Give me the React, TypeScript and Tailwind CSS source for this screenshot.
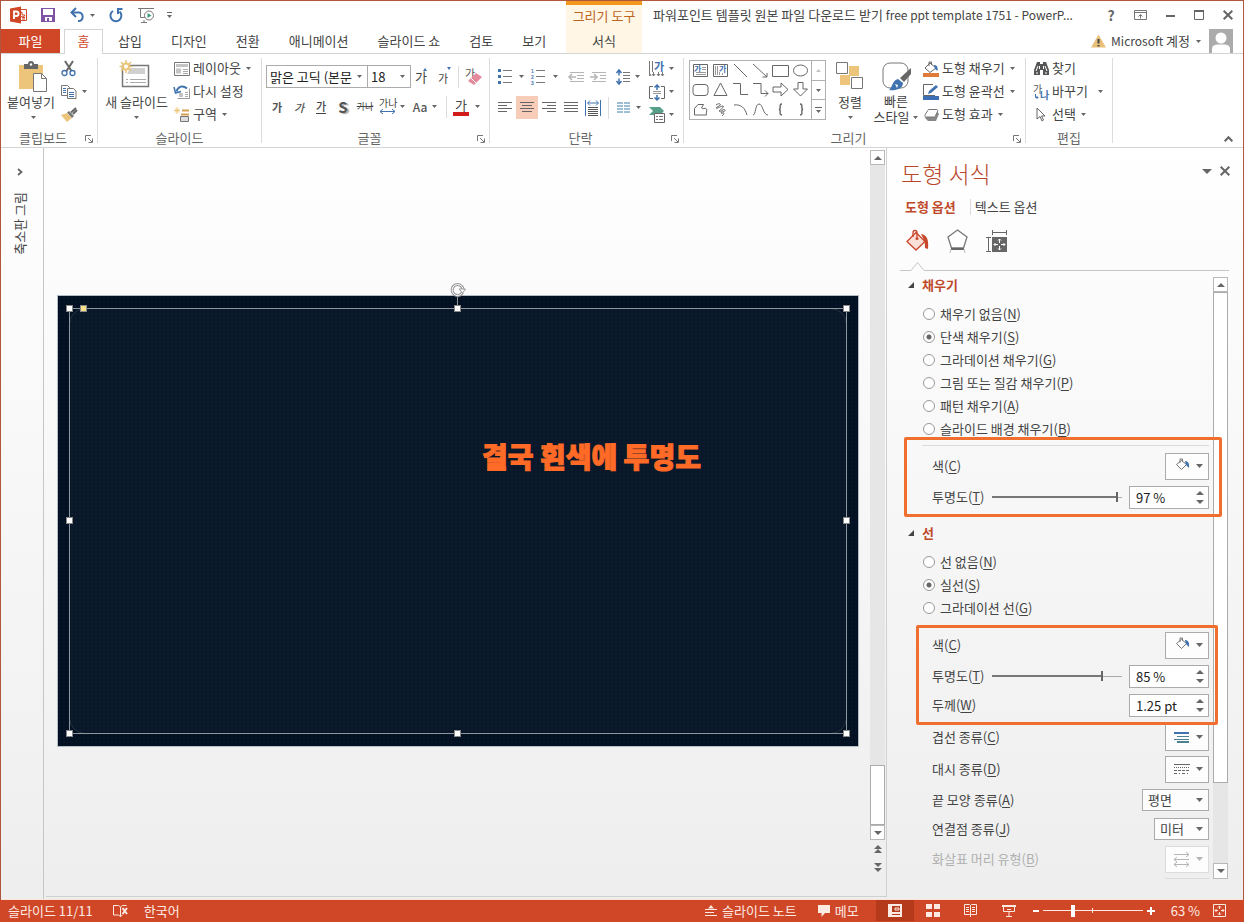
import { useState, type ReactNode } from 'react'
import clsx from 'clsx'

/* ---------- helpers ---------- */

interface GlyphProps {
  w: number
  h: number
  children: ReactNode
  className?: string
}

function Glyph({ w, h, children, className }: GlyphProps) {
  return (
    <svg
      width={w}
      height={h}
      viewBox={`0 0 ${w} ${h}`}
      fill="none"
      aria-hidden="true"
      className={clsx('shrink-0 overflow-visible', className)}
    >
      {children}
    </svg>
  )
}

function Caret({ className = 'text-[#666]' }: { className?: string }) {
  return (
    <Glyph w={5} h={3} className={className}>
      <path d="M0 0h5L2.5 3z" fill="currentColor" />
    </Glyph>
  )
}

function BigCaret({ up = false }: { up?: boolean }) {
  return (
    <Glyph w={8} h={4} className={clsx('text-[#666]', up && 'rotate-180')}>
      <path d="M0 0h8L4 4z" fill="currentColor" />
    </Glyph>
  )
}

interface ToolProps {
  label: string
  className?: string
  children: ReactNode
}

function Tool({ label, className, children }: ToolProps) {
  return (
    <button
      type="button"
      aria-label={label}
      className={clsx('flex shrink-0 items-center justify-center', className)}
    >
      {children}
    </button>
  )
}

function RowTool({
  icon,
  text,
  caret = true,
}: {
  icon: ReactNode
  text: string
  caret?: boolean
}) {
  return (
    <button type="button" className="flex h-[23px] items-center whitespace-nowrap">
      <span className="flex w-4 justify-center">{icon}</span>
      <span className="ml-[3px] pb-[2px] leading-4">{text}</span>
      {caret && <Caret className="ml-[5px] text-[#666]" />}
    </button>
  )
}

interface GroupProps {
  name: string
  className: string
  launcher?: boolean
  children: ReactNode
}

function Group({ name, className, launcher = true, children }: GroupProps) {
  return (
    <>
      <section aria-label={name} className={clsx('shrink-0', className)}>
        <div className="flex h-[72px] pt-[3px]">{children}</div>
        <div className="flex h-[21px] items-center pt-[3px]">
          <span className="flex-1 text-center leading-[18px] text-[#666]">{name}</span>
          {launcher && (
            <Tool label={`${name} 옵션`} className="mr-1 pt-[2px]">
              <Glyph w={8} h={8}>
                <path d="M.5 6V.5H6" stroke="#777" />
                <path d="M3 3l4 4M7.500 3.500v4h-4" stroke="#777" />
              </Glyph>
            </Tool>
          )}
        </div>
      </section>
      <div className="mt-1 mb-1 w-px shrink-0 bg-[#dcdcdc]" />
    </>
  )
}

/* ---------- title bar ---------- */

function QuickAccess() {
  return (
    <div className="flex h-full w-[565px] shrink-0 items-center pl-[9px]">
      <Glyph w={18} h={18}>
        <path d="M10.500 3.500h6v11h-6" stroke="#d04727" fill="#fff" />
        <path d="M12 6a2.500 2.500 0 1 0 3 3h-3zM12 11.500h3M12 13h3" stroke="#d04727" />
        <path d="M0 2.500L11 .5v17L0 15.500z" fill="#d04727" />
        <path d="M4 13V5.500h2.300a2.200 2.200 0 0 1 0 4.500H4" stroke="#fff" strokeWidth="1.800" />
      </Glyph>
      <Tool label="저장" className="ml-[13px]">
        <Glyph w={14} h={14}>
          <path d="M0 0h14v14H0z" fill="#8153a5" />
          <path d="M2 1h10v6H2zM4 9h7v4H8v-3H6v3H4z" fill="#fff" />
        </Glyph>
      </Tool>
      <Tool label="실행 취소" className="ml-[15px]">
        <Glyph w={15} h={14}>
          <path d="M2 4.500h7a4.300 4.300 0 0 1 0 8.500H8" stroke="#3f72ae" strokeWidth="2" />
          <path d="M6 0L1.500 4.500 6 9" stroke="#3f72ae" strokeWidth="2" />
        </Glyph>
      </Tool>
      <Tool label="실행 취소 목록" className="ml-[5px]">
        <Caret />
      </Tool>
      <Tool label="다시 실행" className="ml-[14px]">
        <Glyph w={14} h={14}>
          <path d="M4 3a5.500 5.500 0 1 0 6.500.5" stroke="#3f72ae" strokeWidth="2" />
          <path d="M13.500 1H9v5" stroke="#3f72ae" strokeWidth="2" />
        </Glyph>
      </Tool>
      <Tool label="슬라이드 쇼 시작" className="ml-[15px]">
        <Glyph w={17} h={15}>
          <path d="M0 .5h16M2.500 1v8.500H7M6 12v2M3 14.500h6" stroke="#777" />
          <circle cx="11" cy="7.500" r="4.500" stroke="#777" fill="#fff" />
          <path d="M9.500 5l4 2.500-4 2.500z" fill="#3f9b77" />
        </Glyph>
      </Tool>
      <Tool label="도구 모음 사용자 지정" className="ml-3">
        <Glyph w={5} h={6}>
          <path d="M0 .5h5" stroke="#666" />
          <path d="M0 3h5L2.500 6z" fill="#666" />
        </Glyph>
      </Tool>
    </div>
  )
}

function TitleBar() {
  return (
    <div className="flex h-7 items-center">
      <QuickAccess />
      <div className="h-full w-[76px] shrink-0 border-t-4 border-[#f0971c] bg-[#fff6e6] text-center leading-[22px] text-[#bd6420]">
        그리기 도구
      </div>
      <h1 className="ml-[11px] min-w-0 flex-1 truncate leading-5 text-[#444]">
        파워포인트 템플릿 원본 파일 다운로드 받기{' '}
        <span className="text-[12px]">free ppt template 1751 - PowerP...</span>
      </h1>
      <div className="flex items-center pr-[10px]">
        <Tool label="도움말" className="w-7 text-[14px] leading-5 font-bold text-[#666]">
          ?
        </Tool>
        <Tool label="리본 메뉴 표시 옵션" className="w-[30px]">
          <Glyph w={13} h={10}>
            <path d="M.5.5h12v9H.5zM.5 2.500h12" stroke="#777" />
            <path d="M6.500 8.500v-4M4.500 6.500l2-2 2 2" stroke="#777" />
          </Glyph>
        </Tool>
        <Tool label="최소화" className="w-[30px]">
          <Glyph w={9} h={10}>
            <path d="M0 6h9" stroke="#666" strokeWidth="2" />
          </Glyph>
        </Tool>
        <Tool label="최대화" className="w-[28px]">
          <Glyph w={10} h={10}>
            <path d="M.5 1v8.500h9V1" stroke="#666" />
            <path d="M0 1h10" stroke="#666" strokeWidth="2" />
          </Glyph>
        </Tool>
        <Tool label="닫기" className="w-[20px] justify-end pl-[10px]">
          <Glyph w={10} h={10}>
            <path d="M.7.7l8.600 8.600M9.300.7L.7 9.300" stroke="#666" strokeWidth="2" />
          </Glyph>
        </Tool>
      </div>
    </div>
  )
}

const TABS = ['삽입', '디자인', '전환', '애니메이션', '슬라이드 쇼', '검토', '보기']

function TabRow() {
  return (
    <div className="flex h-[25px] items-stretch border-b border-[#d4d4d4] leading-6">
      <nav className="flex w-[565px] shrink-0">
        <button type="button" className="w-[59px] bg-[#d04727] text-white">
          파일
        </button>
        <button
          type="button"
          className="-mb-px ml-1 w-[39px] border border-b-0 border-[#d4d4d4] bg-white pb-[3px] leading-5 text-[#d04727]"
        >
          홈
        </button>
        {TABS.map((tab) => (
          <button key={tab} type="button" className="pr-[14px] pl-[15px] whitespace-nowrap">
            {tab}
          </button>
        ))}
      </nav>
      <button type="button" className="w-[76px] shrink-0 bg-[#fff6e6]">
        서식
      </button>
      <div className="ml-auto flex items-center pr-[10px]">
        <Glyph w={15} h={14}>
          <path d="M7.500.5L15 13.500H0z" fill="#e8c07a" />
          <path d="M7.500 5v4.500M7.500 11v1.500" stroke="#444" strokeWidth="2" />
        </Glyph>
        <button type="button" className="ml-[5px] flex items-center whitespace-pre">
          <span className="text-[12px]">Microsoft </span>
          계정
          <Caret className="ml-[6px] text-[#666]" />
        </button>
        <Glyph w={24} h={24} className="ml-2">
          <path d="M0 0h24v24H0z" fill="#ababab" />
          <circle cx="12" cy="9" r="5.500" fill="#fff" />
          <path d="M3 24v-4c0-3 2-4 5-4.500h8c3 .5 5 1.500 5 4.500v4z" fill="#fff" />
        </Glyph>
      </div>
    </div>
  )
}

/* ---------- ribbon groups ---------- */

function ClipboardGroup() {
  return (
    <Group name="클립보드" className="w-24">
      <button type="button" className="ml-1 flex w-[52px] flex-col items-center pt-[5px]">
        <Glyph w={29} h={30} className="ml-1">
          <path d="M0 3h24v24H0z" fill="#ecc57b" />
          <path d="M5 2h4a3 3 0 0 1 6 0h4v5H5z" fill="#666" />
          <circle cx="12" cy="2.500" r="1.200" fill="#fff" />
          <path d="M14.500 11.500h8l5 5v13h-13z" fill="#fff" stroke="#777" />
          <path d="M22.500 11.500v5h5" stroke="#777" />
        </Glyph>
        <span className="mt-[2px] leading-4 whitespace-nowrap">붙여넣기</span>
        <Caret className="mt-[6px] ml-1 text-[#666]" />
      </button>
      <div className="ml-1 flex flex-col items-start">
        <Tool label="잘라내기" className="h-[23px]">
          <Glyph w={16} h={15}>
            <path d="M4 0l6.500 10M12 0L5.500 10" stroke="#666" strokeWidth="2" />
            <circle cx="3.500" cy="12" r="2.500" stroke="#3f72ae" strokeWidth="1.300" />
            <circle cx="11.500" cy="12" r="2.500" stroke="#3f72ae" strokeWidth="1.300" />
          </Glyph>
        </Tool>
        <div className="flex h-[23px] items-center">
          <Tool label="복사">
            <Glyph w={16} h={14}>
              <path d="M.5.5h6l2 2v8h-8z" fill="#fff" stroke="#777" />
              <path d="M6.500 3.500h6l2.500 2.500v7.500H6.500z" fill="#fff" stroke="#777" />
              <path d="M2 3.500h3M2 5.500h3M2 7.500h3M8 7.500h5M8 9.500h5M8 11.500h5" stroke="#3f72ae" />
            </Glyph>
          </Tool>
          <Tool label="복사 옵션" className="ml-[5px]">
            <Caret />
          </Tool>
        </div>
        <Tool label="서식 복사" className="h-[23px]">
          <Glyph w={16} h={14}>
            <path d="M0 7l6-2 5 5-5 4z" fill="#ecc57b" />
            <path d="M6 4.500l2-1.500 5 5-2 2z" fill="#777" />
            <path d="M10 4.500L15 0M12 6l4-4" stroke="#666" strokeWidth="2" />
          </Glyph>
        </Tool>
      </div>
    </Group>
  )
}

function SlidesGroup() {
  return (
    <Group name="슬라이드" className="w-[163px]" launcher={false}>
      <button type="button" className="ml-[5px] flex w-[67px] flex-col items-center pt-[3px]">
        <Glyph w={31} h={30} className="-ml-1">
          <path d="M3.500 5.500h26v21h-26z" fill="#fff" stroke="#777" strokeWidth="1.500" />
          <path d="M11 8h15v6H8z" fill="#d0d0d0" />
          <path d="M7 19.500h2M11 19.500h16M7 22.500h2M11 22.500h16" stroke="#aaa" />
          <circle cx="7" cy="6.500" r="3" fill="#fff" stroke="#ecc57b" strokeWidth="2" />
          <path
            d="M7 0v3M7 10v3M.5 6.500h3M10.500 6.500h3M2 2l2.500 2.500M12 2L9.500 4.500M2 11l2.500-2.500M12 11L9.500 8.500"
            stroke="#ecc57b"
            strokeWidth="1.600"
          />
        </Glyph>
        <span className="mt-1 leading-4 whitespace-nowrap">새 슬라이드</span>
        <Caret className="mt-[6px] text-[#666]" />
      </button>
      <div className="ml-1 flex flex-col items-start">
        <RowTool
          text="레이아웃"
          icon={
            <Glyph w={16} h={14}>
              <path d="M.5.500h15v13H.5z" fill="#fff" stroke="#777" />
              <path d="M2 2h12v3H2zM2 6.500h5v5H2z" fill="#c4c4c4" />
              <path d="M9 7.500h5M9 9.500h5M9 11.500h5" stroke="#aaa" />
            </Glyph>
          }
        />
        <RowTool
          text="다시 설정"
          caret={false}
          icon={
            <Glyph w={16} h={14}>
              <path d="M3.500 13.500h12v-10" stroke="#999" />
              <path d="M5 8h4v4H5z" fill="#c4c4c4" />
              <path d="M11 7.500h3M11 9.500h3M11 11.500h3" stroke="#aaa" />
              <path d="M2.500 6.500C4 1 9 0 13 3.500" stroke="#3f72ae" strokeWidth="2" />
              <path d="M0 2l1.500 6L7 6.500" stroke="#3f72ae" strokeWidth="1.500" />
            </Glyph>
          }
        />
        <RowTool
          text="구역"
          icon={
            <Glyph w={16} h={15}>
              <path d="M3 0v7M0 3.500h6M1 1.500l4 4M5 1.500l-4 4" stroke="#ecc57b" />
              <path d="M8 3.500h7M7 7.500h8" stroke="#d8a050" strokeWidth="2" />
              <path d="M6.500 9.500h8v5h-8z" fill="#ddd" stroke="#777" />
            </Glyph>
          }
        />
      </div>
    </Group>
  )
}

function FontGroup() {
  return (
    <Group name="글꼴" className="w-[227px]">
      <div className="flex flex-col pl-1">
        <div className="mt-2 flex h-[23px] items-center">
          <div className="relative h-[23px] w-[102px]">
            <select
              aria-label="글꼴"
              className="h-full w-full appearance-none border border-[#ababab] bg-white pl-[3px] text-[13px] leading-4 text-[#222] outline-none"
            >
              <option>맑은 고딕 (본문</option>
            </select>
            <Caret className="pointer-events-none absolute top-[10px] right-[6px] text-[#666]" />
          </div>
          <div className="relative -ml-px h-[23px] w-11">
            <select
              aria-label="글꼴 크기"
              className="h-full w-full appearance-none border border-[#ababab] bg-white pl-[3px] text-[13px] leading-4 text-[#222] outline-none"
            >
              <option>18</option>
            </select>
            <Caret className="pointer-events-none absolute top-[10px] right-[6px] text-[#666]" />
          </div>
          <Tool label="글꼴 크게" className="w-5 items-end">
            <span className="leading-5">가</span>
            <Glyph w={4} h={3} className="mb-4 -ml-1">
              <path d="M0 3h4L2 0z" fill="#3f72ae" />
            </Glyph>
          </Tool>
          <Tool label="글꼴 작게" className="w-[27px] items-end">
            <span className="text-[11px] leading-4">가</span>
            <Glyph w={4} h={3} className="mb-4 -ml-px">
              <path d="M0 0h4L2 3z" fill="#3f72ae" />
            </Glyph>
          </Tool>
          <div className="h-[22px] w-px bg-[#dcdcdc]" />
          <Tool label="서식 지우기" className="w-[30px]">
            <Glyph w={18} h={18}>
              <text x="0" y="10" fontSize="11" fill="#555">
                가
              </text>
              <path d="M3 13l8-8 6 4-8 8z" fill="#e48a9c" />
              <path d="M6 10l5 5" stroke="#fff" />
            </Glyph>
          </Tool>
        </div>
        <div className="mt-[7px] flex h-[23px] items-center text-[11px] leading-4">
          <Tool label="굵게" className="w-[22px] font-bold text-[#555]">
            가
          </Tool>
          <Tool label="기울임꼴" className="w-[22px] font-medium text-[#555] italic">
            가
          </Tool>
          <Tool label="밑줄" className="w-[22px]">
            <span className="border-b border-[#444] leading-[13px] font-medium">가</span>
          </Tool>
          <Tool
            label="텍스트 그림자"
            className="w-[22px] text-[15px] font-bold text-[#555] text-shadow-[2px_1px_1px_#aaa]"
          >
            S
          </Tool>
          <Tool label="취소선" className="w-[22px] text-[9px] line-through">
            가나
          </Tool>
          <Tool label="문자 간격" className="w-[32px] gap-[3px]">
            <Glyph w={18} h={17}>
              <text x="0" y="9" fontSize="10" fill="#444">
                가나
              </text>
              <path d="M1 13.500h15M4 11l-3 2.500L4 16M13 11l3 2.500-3 2.500" stroke="#3f72ae" />
            </Glyph>
            <Caret />
          </Tool>
          <Tool label="대/소문자 바꾸기" className="w-[34px] gap-[5px] text-[12px] font-medium text-[#555]">
            Aa
            <Caret />
          </Tool>
          <div className="ml-1 h-[22px] w-px bg-[#dcdcdc]" />
          <Tool label="글꼴 색" className="ml-[6px] gap-[6px]">
            <span className="w-4 border-b-4 border-[#d11a1a] text-center text-[13px] leading-[14px]">가</span>
            <Caret />
          </Tool>
        </div>
      </div>
    </Group>
  )
}

function AlignGlyph({ d }: { d: string }) {
  return (
    <Glyph w={14} h={11}>
      <path d={d} stroke="#666" />
    </Glyph>
  )
}

function ParagraphGroup() {
  return (
    <Group name="단락" className="w-[193px]">
      <div className="flex w-[156px] flex-col">
        <div className="mt-2 flex h-[23px] items-center">
          <Tool label="글머리 기호" className="ml-2 gap-[7px]">
            <Glyph w={14} h={15}>
              <path d="M0 1.500h3M0 7.500h3M0 13.500h3" stroke="#3f72ae" strokeWidth="3" />
              <path d="M5 1.500h9M5 7.500h9M5 13.500h9" stroke="#777" />
            </Glyph>
            <Caret />
          </Tool>
          <Tool label="번호 매기기" className="ml-[7px] gap-[7px]">
            <Glyph w={15} h={17} className="font-['Liberation_Sans',sans-serif]">
              <text x="0" y="5" fontSize="5" fontWeight="700" fill="#3f72ae">
                1
              </text>
              <text x="0" y="11" fontSize="5" fontWeight="700" fill="#3f72ae">
                2
              </text>
              <text x="0" y="17" fontSize="5" fontWeight="700" fill="#3f72ae">
                3
              </text>
              <path d="M5 2.500h9M5 8.500h9M5 14.500h9" stroke="#777" />
            </Glyph>
            <Caret />
          </Tool>
          <Tool label="목록 수준 줄임" className="ml-[10px]">
            <Glyph w={16} h={10}>
              <path d="M2 .5h14M9 3.500h7M9 6.500h7M2 9.500h14" stroke="#b5b5b5" />
              <path d="M1 5h7M4 2L1 5l3 3" stroke="#b5b5b5" strokeWidth="1.500" />
            </Glyph>
          </Tool>
          <Tool label="목록 수준 늘림" className="ml-[6px]">
            <Glyph w={16} h={10}>
              <path d="M2 .5h14M10 3.500h6M10 6.500h6M2 9.500h14" stroke="#b5b5b5" />
              <path d="M0 5h7M4 2l3 3-3 3" stroke="#b5b5b5" strokeWidth="1.500" />
            </Glyph>
          </Tool>
          <Tool label="줄 간격" className="ml-[10px] gap-[5px]">
            <Glyph w={14} h={16}>
              <path d="M3 2v4.500M3 9.500V14M.5 4L3 1l2.500 3M.5 12L3 15l2.500-3" stroke="#3f72ae" strokeWidth="1.500" />
              <path d="M7 3.500h7M7 6.500h7M7 9.500h7M7 12.500h7" stroke="#777" />
            </Glyph>
            <Caret />
          </Tool>
        </div>
        <div className="mt-2 flex h-[23px] items-center">
          <Tool label="왼쪽 맞춤" className="ml-1 h-full w-[22px]">
            <AlignGlyph d="M0 .5h14M0 3.500h9M0 6.500h14M0 9.500h9" />
          </Tool>
          <Tool label="가운데 맞춤" className="h-full w-[22px] bg-[#f7cdb9]">
            <AlignGlyph d="M0 .5h14M2 3.500h10M0 6.500h14M2 9.500h10" />
          </Tool>
          <Tool label="오른쪽 맞춤" className="h-full w-[22px]">
            <AlignGlyph d="M0 .5h14M5 3.500h9M0 6.500h14M5 9.500h9" />
          </Tool>
          <Tool label="양쪽 맞춤" className="h-full w-[22px]">
            <AlignGlyph d="M0 .5h14M0 3.500h14M0 6.500h14M0 9.500h14" />
          </Tool>
          <Tool label="균등 분할" className="h-full w-[22px]">
            <Glyph w={16} h={16}>
              <path d="M.5 0v16M15.500 0v16M3 3h10M5 .5L2.500 3 5 5.500M11 .5L13.500 3 11 5.500" stroke="#3f72ae" />
              <path d="M3 7.500h10M3 9.500h10M3 11.500h10M3 13.500h10M3 15.500h10" stroke="#555" />
            </Glyph>
          </Tool>
          <div className="ml-1 h-[22px] w-px bg-[#dcdcdc]" />
          <Tool label="열" className="ml-2 gap-[6px]">
            <Glyph w={13} h={11}>
              <path d="M0 1h6M0 4h6M0 7h6M0 10h6M7 1h6M7 4h6M7 7h6M7 10h6" stroke="#3f80a8" />
            </Glyph>
            <Caret />
          </Tool>
        </div>
      </div>
      <div className="flex flex-col pl-[3px]">
        <Tool label="텍스트 방향" className="h-[23px] gap-1">
          <Glyph w={16} h={16}>
            <path d="M.5 0v11M3.500 0v11" stroke="#777" />
            <path d="M.5 11v4M4.500 11v4M9.500 11v4M13.500 11v4" stroke="#777" />
            <path d="M0 13h1l1 2M3 13l1.500 2L6 13M8 13l1.500 2 1.500-2M12 13l1.500 2 1.500-2" stroke="#777" />
            <text x="5" y="10" fontSize="11" fontWeight="700" fill="#3f72ae">
              가
            </text>
          </Glyph>
          <Caret />
        </Tool>
        <Tool label="텍스트 맞춤" className="h-[23px] gap-1">
          <Glyph w={16} h={16}>
            <path d="M4 2.500H.5v12H4M12 2.500h3.500v12H12" stroke="#666" />
            <path d="M4 7.500h8M4 9.500h8" stroke="#999" />
            <path
              d="M8 1v5M8 16v-5M5.500 3.500L8 1l2.500 2.500M5.500 13.500L8 16l2.500-2.500"
              stroke="#3f72ae"
              strokeWidth="1.500"
            />
          </Glyph>
          <Caret />
        </Tool>
        <Tool label="SmartArt로 변환" className="h-[23px] gap-1">
          <Glyph w={16} h={16}>
            <path d="M0 0h11l4 4-4 4H0l4-4z" fill="#56a08a" />
            <path d="M5.500 6.500h10v9h-10z" fill="#fff" stroke="#666" />
            <path d="M7 9.500h2M10 9.500h4M7 12.500h2M10 12.500h4" stroke="#777" />
          </Glyph>
          <Caret />
        </Tool>
      </div>
    </Group>
  )
}

const SHAPES: { name: string; draw: ReactNode }[] = [
  {
    name: '텍스트 상자',
    draw: (
      <>
        <path d="M1.500 2.500h14v12h-14z" />
        <text x="2" y="10" fontSize="8" fontWeight="700" fill="#3f72ae" stroke="none">
          가
        </text>
        <path d="M10 5.500h4M10 7.500h4M4 10.500h10M4 12.500h10" stroke="#999" />
      </>
    ),
  },
  {
    name: '세로 텍스트 상자',
    draw: (
      <>
        <path d="M1.500 2.500h14v12h-14z" />
        <text x="7" y="10" fontSize="8" fontWeight="700" fill="#3f72ae" stroke="none">
          가
        </text>
        <path d="M3.500 4v9M5.500 4v9M7.500 10v3M10.500 11v2" stroke="#999" />
      </>
    ),
  },
  { name: '선', draw: <path d="M2 2l13 13" /> },
  { name: '화살표', draw: <path d="M1 2l14 13M15 11v4h-4.500" /> },
  { name: '직사각형', draw: <path d="M.5 3.500h16v11H.5z" /> },
  { name: '타원', draw: <ellipse cx="8.500" cy="8.500" rx="7" ry="5.500" /> },
  { name: '모서리가 둥근 직사각형', draw: <rect x="1" y="3.500" width="15" height="11" rx="3" /> },
  { name: '이등변 삼각형', draw: <path d="M8.500 2L15 14.500H2z" /> },
  { name: '꺾인 연결선', draw: <path d="M1 2.500h7.500v11H16" /> },
  { name: '꺾인 화살표 연결선', draw: <path d="M1 2.500h8v10h7M13 9.500l3 3-3 3" /> },
  { name: '오른쪽 화살표', draw: <path d="M1 6h8V2l7 6.500L9 15v-4H1z" /> },
  { name: '아래쪽 화살표', draw: <path d="M6 1.500h5V8h4.500l-7 7-7-7H6z" /> },
  {
    name: '자유형',
    draw: <path d="M2.500 14V7.500L6 3.500h5.500L9.500 7c1 2 4-1 5 1 1 3-1 3 0 6z" />,
  },
  {
    name: '자유 곡선',
    draw: <path d="M4 4c4-3 7 0 1 2-3 3 3 0 5-1 4 0-1 3-3 5 1 2 5-3 6-1 1 2-4 1-4 3 1 1 3-1 3 0s-1 2-2 3" />,
  },
  { name: '원호', draw: <path d="M2 4c7-1 11 3 13 10" /> },
  { name: '곡선', draw: <path d="M1 14c3 0 2-11 6-11s4 11 9 11" /> },
  {
    name: '왼쪽 중괄호',
    draw: <path d="M10 3c-4 0 0 5-3 5.500 3 .5-1 5.500 3 5.500" strokeWidth="1.400" />,
  },
  {
    name: '오른쪽 중괄호',
    draw: <path d="M8 3c4 0 0 5 3 5.500-3 .5 1 5.500-3 5.500" strokeWidth="1.400" />,
  },
]

function DrawingGroup() {
  return (
    <Group name="그리기" className="w-[341px]">
      <div className="mt-[3px] ml-[5px] flex h-[60px] w-[137px] shrink-0 border border-[#b0b0b0]">
        <div className="grid w-[121px] grid-cols-6 grid-rows-3 pr-px">
          {SHAPES.map((shape) => (
            <Tool key={shape.name} label={shape.name}>
              <Glyph w={17} h={17}>
                <g stroke="#666">{shape.draw}</g>
              </Glyph>
            </Tool>
          ))}
        </div>
        <div className="flex flex-1 flex-col border-l border-[#b0b0b0]">
          <Tool label="위로" className="flex-1">
            <Caret className="rotate-180 text-[#c4c4c4]" />
          </Tool>
          <Tool label="아래로" className="flex-1 border-y border-[#b0b0b0]">
            <Caret />
          </Tool>
          <Tool label="자세히" className="flex-1">
            <Glyph w={7} h={6}>
              <path d="M0 .5h7" stroke="#666" />
              <path d="M1 3h5L3.500 6z" fill="#666" />
            </Glyph>
          </Tool>
        </div>
      </div>
      <button type="button" className="ml-1 flex w-10 flex-col items-center pt-[5px]">
        <Glyph w={28} h={30}>
          <path d="M13 4h10v10H13zM4 13h10v10H4z" fill="#ecc57b" />
          <path d="M.5.500h11v11H.5zM15.500 15.500h11v11h-11z" fill="#fff" stroke="#777" />
        </Glyph>
        <span className="mt-[2px] leading-4">정렬</span>
        <Caret className="mt-[6px] text-[#666]" />
      </button>
      <button type="button" className="flex w-[52px] flex-col items-center pt-[5px]">
        <Glyph w={30} h={30} className="ml-[2px]">
          <rect x="1" y="1" width="25" height="25" rx="7" fill="#fff" stroke="#777" />
          <path d="M29 6v6l-7 8-4-4z" fill="#666" />
          <path d="M16 17l5 4c0 6-8 8-14 7 3-1 3-10 9-11z" fill="#3f72ae" />
          <path d="M13 22l3 1-1 3z" fill="#fff" />
        </Glyph>
        <span className="mt-px leading-4">빠른</span>
        <span className="flex items-center gap-1 leading-4 whitespace-nowrap">
          스타일
          <Caret />
        </span>
      </button>
      <div className="ml-px flex flex-col items-start">
        <RowTool
          text="도형 채우기"
          icon={
            <Glyph w={16} h={16}>
              <path d="M7 2l6 5-6 4.500-5-4.500z" fill="#fff" stroke="#666" />
              <path d="M6 5V1h2.500v3" stroke="#666" />
              <path d="M11 4c3 0 4 2 3.500 6L12 8z" fill="#3f72ae" />
              <path d="M0 12h16v4H0z" fill="#e07b39" />
            </Glyph>
          }
        />
        <RowTool
          text="도형 윤곽선"
          icon={
            <Glyph w={16} h={16}>
              <path d="M10 .5H.5v11H12" stroke="#666" />
              <path d="M5 10l1-3 7-6 2 2-7 6z" fill="#3f72ae" />
              <path d="M0 12h16v4H0z" fill="#3f6fb5" />
            </Glyph>
          }
        />
        <RowTool
          text="도형 효과"
          icon={
            <Glyph w={15} h={14}>
              <path d="M5 3h8l2 3-3 7H4l-3-3z" fill="#888" />
              <path
                d="M5 1.500h7c2 0 2 1 1 3l-1.500 3c0 1-1 1.500-2 1.500H2.500c-2 0-2-1-1-3l2-3c.5-1 .5-1.500 1.500-1.500z"
                fill="#fff"
                stroke="#777"
              />
            </Glyph>
          }
        />
      </div>
    </Group>
  )
}

function EditGroup() {
  return (
    <Group name="편집" className="w-[86px]" launcher={false}>
      <div className="ml-[7px] flex flex-1 flex-col items-start">
        <RowTool
          text="찾기"
          caret={false}
          icon={
            <Glyph w={15} h={13}>
              <path d="M3 0h3v2h3V0h3l3 8v5H9V8H6v5H0V8z" fill="#555" />
              <path d="M4 4L2 9M5.500 4v3M9.500 4v3M11 4l2 5M2 11h2M11 11h2" stroke="#fff" />
            </Glyph>
          }
        />
        <div className="flex items-center">
          <RowTool
            text="바꾸기"
            caret={false}
            icon={
              <Glyph w={17} h={16}>
                <text x="0" y="9" fontSize="10" fill="#555">
                  가
                </text>
                <text x="7" y="15" fontSize="10" fontWeight="700" fill="#3f72ae">
                  나
                </text>
                <path d="M2.500 10v3.500H5M3.500 12L5 13.500 3.500 15" stroke="#3f72ae" />
              </Glyph>
            }
          />
          <Tool label="바꾸기 옵션" className="ml-[10px]">
            <Caret />
          </Tool>
        </div>
        <RowTool
          text="선택"
          icon={
            <Glyph w={10} h={15}>
              <path d="M1 1v11l3-2.500 2 4.500 1.500-1-2-4H9z" fill="#fff" stroke="#666" />
            </Glyph>
          }
        />
      </div>
    </Group>
  )
}

function Ribbon() {
  return (
    <div className="flex h-[94px] overflow-hidden border-b border-[#d4d4d4] bg-white">
      <ClipboardGroup />
      <SlidesGroup />
      <FontGroup />
      <ParagraphGroup />
      <DrawingGroup />
      <EditGroup />
      <Tool label="리본 메뉴 축소" className="ml-auto items-end pr-[10px] pb-[5px]">
        <Glyph w={9} h={6}>
          <path d="M.7 5.300l3.800-4 3.800 4" stroke="#666" strokeWidth="2" />
        </Glyph>
      </Tool>
    </div>
  )
}

/* ---------- slide area ---------- */

const HANDLES = [
  '-top-1 -left-1',
  '-top-1 left-1/2 -ml-1',
  '-top-1 -right-1',
  'top-1/2 -left-1 -mt-1',
  'top-1/2 -right-1 -mt-1',
  '-bottom-1 -left-1',
  '-bottom-1 left-1/2 -ml-1',
  '-right-1 -bottom-1',
]

function Slide() {
  return (
    <div className="relative h-[452px] w-[802px] shrink-0 border border-[#b4bcc4] bg-[#021022] bg-[radial-gradient(#05152a_1px,transparent_1px)] bg-size-[4px_4px]">
      <div className="absolute inset-x-[11px] inset-y-3 rounded-[16px] border border-[#28333f] bg-[#f4ffff]/3" />
      <div className="absolute inset-x-[11px] inset-y-3 border border-[#8d959d]">
        {HANDLES.map((place) => (
          <span key={place} className={clsx('absolute h-[7px] w-[7px] border border-[#888] bg-white', place)} />
        ))}
        <span className="absolute -top-1 left-[10px] h-[7px] w-[7px] border border-[#888] bg-[#f7e08a]" />
        <span className="absolute -top-3 left-1/2 -ml-px h-2 w-px bg-[#999]" />
        <Glyph w={16} h={14} className="absolute -top-[26px] left-1/2 -ml-2">
          <path d="M12.500 9.500a5.500 5.500 0 1 1 .5-3.500" stroke="#999" strokeWidth="3" />
          <path d="M12.500 9.500a5.500 5.500 0 1 1 .5-3.500" stroke="#fff" />
          <path d="M9 6h6.500l-3 4z" fill="#fff" stroke="#999" />
        </Glyph>
      </div>
      <p className="absolute top-[140px] left-[424px] text-[28px] leading-10 font-black whitespace-nowrap text-[#ff6a26] [-webkit-text-stroke:1px_#ff6a26]">
        결국 흰색에 투명도
      </p>
    </div>
  )
}

function Workspace() {
  return (
    <div className="flex min-w-0 flex-1">
      <aside className="flex w-[43px] shrink-0 flex-col items-center border-r border-[#c6c6c6] pt-5 pr-1">
        <Tool label="축소판 그림 펼치기">
          <Glyph w={6} h={8}>
            <path d="M1 1l3.500 3L1 7" stroke="#666" strokeWidth="1.800" />
          </Glyph>
        </Tool>
        <span className="mt-4 rotate-180 leading-5 [writing-mode:vertical-rl] [text-orientation:sideways]">
          축소판 그림
        </span>
      </aside>
      <main className="mb-[2px] ml-[2px] flex min-w-0 flex-1 border-r border-b border-[#d0d0d0]">
        <div className="flex min-w-0 flex-1 items-center justify-center overflow-hidden pb-[3px]">
          <Slide />
        </div>
        <div className="mr-px flex w-[15px] shrink-0 flex-col pt-[2px] pb-6">
          <Tool label="위로 스크롤" className="h-[15px] border border-[#b8b8b8] bg-white">
            <BigCaret up />
          </Tool>
          <div className="flex flex-1 flex-col justify-end bg-[#e6e6e6]">
            <div className="h-[60px] border border-[#ababab] bg-white" />
          </div>
          <Tool label="아래로 스크롤" className="h-[15px] border border-[#b8b8b8] bg-white">
            <BigCaret />
          </Tool>
          <Tool label="이전 슬라이드" className="mt-[5px]">
            <Glyph w={8} h={9}>
              <path d="M4 0l4 4H0zM4 4l4 4H0z" fill="#666" />
            </Glyph>
          </Tool>
          <Tool label="다음 슬라이드" className="mt-[9px]">
            <Glyph w={8} h={9}>
              <path d="M4 4L0 0h8zM4 9L0 5h8z" fill="#666" />
            </Glyph>
          </Tool>
        </div>
      </main>
    </div>
  )
}

/* ---------- format pane ---------- */

function Mnemonic({ text, letter }: { text: string; letter: string }) {
  return (
    <>
      {text}(<span className="underline underline-offset-2">{letter}</span>)
    </>
  )
}

function SectionHeader({ title }: { title: string }) {
  return (
    <h3 className="mb-[9px] flex h-4 items-center pl-[21px] leading-4 font-bold text-[#bf4a2b]">
      <Glyph w={6} h={6} className="mr-2">
        <path d="M6 0v6H0z" fill="#444" />
      </Glyph>
      {title}
    </h3>
  )
}

interface RadioListProps {
  name: string
  options: [string, string][]
  initial: string
}

function RadioList({ name, options, initial }: RadioListProps) {
  const [value, setValue] = useState(initial)
  return (
    <div className="pl-9">
      {options.map(([text, letter]) => (
        <label key={letter} className="flex h-[23px] items-center gap-[5px] leading-4">
          <input
            type="radio"
            name={name}
            checked={value === letter}
            onChange={() => setValue(letter)}
            className="h-3 w-3 appearance-none rounded-full border border-[#999] bg-white checked:bg-[radial-gradient(circle,#666_2px,#fff_3px)]"
          />
          <span>
            <Mnemonic text={text} letter={letter} />
          </span>
        </label>
      ))}
    </div>
  )
}

interface RowProps {
  id: string
  text: string
  letter: string
  className: string
  disabled?: boolean
  children: ReactNode
}

function Row({ id, text, letter, className, disabled, children }: RowProps) {
  return (
    <div className={clsx('flex items-center pl-[10px]', className)}>
      <label htmlFor={id} className={clsx('leading-4 whitespace-nowrap', disabled && 'text-[#b0b0b0]')}>
        <Mnemonic text={text} letter={letter} />
      </label>
      <div className="ml-auto flex items-center">{children}</div>
    </div>
  )
}

function DropButton({ id, disabled, children }: { id: string; disabled?: boolean; children: ReactNode }) {
  return (
    <button
      id={id}
      type="button"
      disabled={disabled}
      className={clsx(
        'flex h-[27px] w-11 items-center justify-end gap-[6px] border bg-[#fdfdfd] pr-[5px]',
        disabled ? 'border-[#dcdcdc] text-[#b5b5b5]' : 'border-[#ababab] text-[#666]',
      )}
    >
      {children}
      <Glyph w={7} h={4}>
        <path d="M0 0h7L3.500 4z" fill="currentColor" />
      </Glyph>
    </button>
  )
}

function Spinner({ id, initial }: { id: string; initial: string }) {
  return (
    <div className="flex h-[23px] w-20 items-center border border-[#ababab] bg-white">
      <input
        id={id}
        type="text"
        defaultValue={initial}
        className="h-full min-w-0 flex-1 bg-transparent pl-[6px] text-[13px] leading-4 text-[#222] outline-none"
      />
      <span className="mr-1 flex flex-col gap-[5px]">
        <Tool label="늘리기">
          <BigCaret up />
        </Tool>
        <Tool label="줄이기">
          <BigCaret />
        </Tool>
      </span>
    </div>
  )
}

function Transparency({ id, initial }: { id: string; initial: number }) {
  const [value, setValue] = useState(initial)
  return (
    <>
      <input
        type="range"
        aria-label="투명도"
        min={0}
        max={100}
        value={value}
        onChange={(e) => setValue(Number(e.target.value))}
        style={{ backgroundSize: `${value}% 2px, 100% 1px` }}
        className="mr-[7px] h-3 w-[130px] appearance-none bg-[linear-gradient(#777,#777),linear-gradient(#aaa,#aaa)] bg-left bg-no-repeat [&::-webkit-slider-thumb]:h-[10px] [&::-webkit-slider-thumb]:w-[2px] [&::-webkit-slider-thumb]:appearance-none [&::-webkit-slider-thumb]:bg-[#666]"
      />
      <Spinner id={id} initial={`${initial} %`} />
    </>
  )
}

function PaneSelect({ id, value, className }: { id: string; value: string; className: string }) {
  return (
    <div className={clsx('relative h-[22px]', className)}>
      <select
        id={id}
        className="h-full w-full appearance-none border border-[#ababab] bg-[#fdfdfd] pl-[5px] text-[13px] leading-4 outline-none"
      >
        <option>{value}</option>
      </select>
      <Glyph w={7} h={4} className="pointer-events-none absolute top-[9px] right-[6px]">
        <path d="M0 0h7L3.500 4z" fill="#666" />
      </Glyph>
    </div>
  )
}

function BucketSmall() {
  return (
    <Glyph w={15} h={13} className="mb-1">
      <path d="M6.500 2.500l5 4-5 5-5-5z" fill="#fff" stroke="#777" />
      <path d="M5 5V1h2.500v3" stroke="#777" />
      <path d="M10 3c3 0 4.500 2 4 7l-3-3z" fill="#3f72ae" />
    </Glyph>
  )
}

function Highlight({ className }: { className: string }) {
  return (
    <div
      className={clsx('pointer-events-none absolute z-10 rounded-[2px] border-3 border-[#f06f2f]', className)}
    />
  )
}

function FormatPane() {
  return (
    <aside className="flex w-[356px] shrink-0 flex-col">
      <div className="flex h-[46px] items-center pr-[13px] pl-[14px]">
        <h2 className="flex-1 pt-[3px] text-[23px] leading-8 font-light text-[#b8472a]">도형 서식</h2>
        <Tool label="작업 창 옵션" className="mr-2">
          <Glyph w={10} h={5}>
            <path d="M0 0h10L5 5z" fill="#666" />
          </Glyph>
        </Tool>
        <Tool label="작업 창 닫기">
          <Glyph w={10} h={10}>
            <path d="M.7.7l8.600 8.600M9.300.7L.7 9.300" stroke="#666" strokeWidth="2" />
          </Glyph>
        </Tool>
      </div>
      <div className="mt-[5px] flex h-4 items-center pl-[18px] leading-4">
        <button type="button" className="font-bold text-[#bf4a2b]">
          도형 옵션
        </button>
        <span className="mr-1 ml-[14px] h-4 w-px bg-[#dcdcdc]" />
        <button type="button">텍스트 옵션</button>
      </div>
      <div className="mt-[14px] flex h-6 items-center pl-[19px]">
        <Tool label="채우기 및 선">
          <Glyph w={24} h={22}>
            <path d="M10 2.500l9 9-9 8.500L1 11.500z" fill="#fbe0d8" stroke="#c8472b" strokeWidth="1.300" />
            <path d="M7 7V2.500a2 2 0 0 1 4 0V7" stroke="#c8472b" strokeWidth="1.300" />
            <circle cx="11" cy="8.500" r="1.500" fill="#c8472b" />
            <path d="M15 4c6 1 8 6 7 15l-3-1c0-4-.5-6-.5-7z" fill="#c8472b" />
          </Glyph>
        </Tool>
        <Tool label="효과" className="ml-[17px]">
          <Glyph w={21} h={24}>
            <path d="M10.500 1l9.500 7-3.500 11h-12L1 8z" fill="#fff" stroke="#777" strokeWidth="1.300" />
            <path d="M4 20h13" stroke="#666" strokeWidth="2" />
            <path d="M4 20l-1 4M17 20l1 4" stroke="#bbb" />
          </Glyph>
        </Tool>
        <Tool label="크기 및 속성" className="ml-[18px]">
          <Glyph w={22} h={22}>
            <path d="M6 7h15v15H6z" fill="#666" />
            <path d="M6.500 0v5M20.500 0v5M6 2.500h15M0 7.500h5M0 21.500h5M2.500 7v15" stroke="#666" />
            <path
              d="M13.500 9v4M13.500 16v4M8 14.500h4M15 14.500h4M12 10.500l1.500-1.500 1.500 1.500M12 18.500l1.500 1.500 1.500-1.500M9.500 13L8 14.500 9.500 16M17.500 13l1.500 1.500-1.500 1.500"
              stroke="#fff"
            />
          </Glyph>
        </Tool>
      </div>
      <div className="mt-2 mr-[14px] ml-[13px] flex h-[10px] items-end">
        <span className="h-px w-[11px] bg-[#c6c6c6]" />
        <Glyph w={13} h={10}>
          <path d="M0 9.500L6.500 1.500 13 9.500" stroke="#c6c6c6" />
        </Glyph>
        <span className="h-px flex-1 bg-[#c6c6c6]" />
      </div>
      <div className="mt-[6px] mb-5 flex min-h-0 flex-1">
        <div className="relative min-w-0 flex-1">
          <div className="h-[602px] overflow-hidden">
            <SectionHeader title="채우기" />
            <RadioList
              name="fill"
              initial="S"
              options={[
                ['채우기 없음', 'N'],
                ['단색 채우기', 'S'],
                ['그라데이션 채우기', 'G'],
                ['그림 또는 질감 채우기', 'P'],
                ['패턴 채우기', 'A'],
                ['슬라이드 배경 채우기', 'B'],
              ]}
            />
            <div className="ml-[35px] pt-[5px]">
              <div className="mb-1 h-px bg-[#dcdcdc]" />
              <Row id="fill-color" text="색" letter="C" className="h-8">
                <DropButton id="fill-color">
                  <BucketSmall />
                </DropButton>
              </Row>
              <Row id="fill-alpha" text="투명도" letter="T" className="h-[30px]">
                <Transparency id="fill-alpha" initial={97} />
              </Row>
            </div>
            <div className="h-[13px]" />
            <SectionHeader title="선" />
            <RadioList
              name="line"
              initial="S"
              options={[
                ['선 없음', 'N'],
                ['실선', 'S'],
                ['그라데이션 선', 'G'],
              ]}
            />
            <div className="ml-[35px] pt-[10px]">
              <Row id="line-color" text="색" letter="C" className="h-8">
                <DropButton id="line-color">
                  <BucketSmall />
                </DropButton>
              </Row>
              <Row id="line-alpha" text="투명도" letter="T" className="h-[30px]">
                <Transparency id="line-alpha" initial={85} />
              </Row>
              <Row id="line-width" text="두께" letter="W" className="h-7">
                <Spinner id="line-width" initial="1.25 pt" />
              </Row>
            </div>
            <div className="ml-[35px] pt-[2px]">
              <Row id="compound" text="겹선 종류" letter="C" className="h-8">
                <DropButton id="compound">
                  <Glyph w={15} h={11} className="mr-px">
                    <path d="M0 1h15" stroke="#3f72ae" strokeWidth="2" />
                    <path d="M3 4.500h12M0 7.500h15" stroke="#4d8191" />
                    <path d="M3 10h12" stroke="#4d8191" strokeWidth="2" />
                  </Glyph>
                </DropButton>
              </Row>
              <Row id="dash" text="대시 종류" letter="D" className="h-8">
                <DropButton id="dash">
                  <Glyph w={16} h={11}>
                    <path d="M0 .5h16" stroke="#666" />
                    <path d="M0 3.500h16" stroke="#666" strokeDasharray="1 1" />
                    <path d="M0 6.500h16" stroke="#666" strokeDasharray="3 1" />
                    <path d="M0 9.500h16" stroke="#666" strokeDasharray="3 2 1 2" />
                  </Glyph>
                </DropButton>
              </Row>
              <Row id="cap" text="끝 모양 종류" letter="A" className="h-[30px]">
                <PaneSelect id="cap" value="평면" className="w-[67px]" />
              </Row>
              <Row id="join" text="연결점 종류" letter="J" className="h-7">
                <PaneSelect id="join" value="미터" className="w-[55px]" />
              </Row>
              <Row id="arrow" text="화살표 머리 유형" letter="B" className="h-8" disabled>
                <DropButton id="arrow" disabled>
                  <Glyph w={17} h={17}>
                    <path
                      d="M1 3.500h15M13 1l3 2.500L13 6M1 8.500h15M4 6L1 8.500 4 11M1 13.500h15M4 11l-3 2.500L4 16M13 11l3 2.500-3 2.500"
                      stroke="currentColor"
                    />
                  </Glyph>
                </DropButton>
              </Row>
              <div className="mt-[3px] ml-auto h-1 w-11 border border-[#dcdcdc] bg-white" />
            </div>
          </div>
          <Highlight className="top-[160px] -right-[13px] left-[17px] h-20" />
          <Highlight className="top-[348px] -right-[9px] left-[29px] h-[100px]" />
        </div>
        <div className="mr-[15px] ml-1 flex h-[602px] w-[15px] flex-col bg-[#e6e6e6]">
          <Tool label="위로 스크롤" className="h-[15px] border border-[#b8b8b8] bg-white">
            <BigCaret up />
          </Tool>
          <div className="h-[491px] border border-[#ababab] bg-white" />
          <Tool label="아래로 스크롤" className="mt-auto h-4 border border-[#b8b8b8] bg-white">
            <BigCaret />
          </Tool>
        </div>
      </div>
    </aside>
  )
}

/* ---------- status bar ---------- */

function StatusBar() {
  return (
    <footer className="flex h-6 items-center bg-[#d04727] pr-[18px] pb-[3px] pl-2 leading-5 whitespace-nowrap text-[#fdeae3]">
      <span>슬라이드 11/11</span>
      <Tool label="맞춤법 검사" className="ml-5">
        <Glyph w={15} h={13}>
          <path d="M.5 1.500h5l2 1.500v9.500l-2-1.500h-5zM7.500 3l2-1.500h4M7.500 12.500l2-1.500" stroke="#fdeae3" />
          <path d="M9.500 4l4.500 6M14 4l-4.500 6" stroke="#fdeae3" strokeWidth="2" />
        </Glyph>
      </Tool>
      <button type="button" className="ml-4">
        한국어
      </button>
      <button type="button" className="ml-auto flex items-center gap-[5px]">
        <Glyph w={12} h={11}>
          <path d="M3 3.500h6L6 0z" fill="#fdeae3" />
          <path d="M0 4.500h12M0 7.500h9M0 10.500h12" stroke="#fdeae3" />
        </Glyph>
        슬라이드 노트
      </button>
      <button type="button" className="ml-[21px] flex items-center gap-[5px]">
        <Glyph w={12} h={12}>
          <path d="M0 0h12v8H7l-3.500 4V8H0z" fill="#fdeae3" />
        </Glyph>
        메모
      </button>
      <Tool label="기본 보기" className="ml-[17px] h-[21px] w-[38px] bg-[#b53a1c]">
        <Glyph w={14} h={13}>
          <path d="M1 1h12v11H1z" stroke="#fdeae3" strokeWidth="2" />
          <path d="M3 0v13M3 9h10" stroke="#fdeae3" strokeWidth="2" />
          <path d="M7 4h4v2H7z" stroke="#fdeae3" />
        </Glyph>
      </Tool>
      <Tool label="여러 슬라이드" className="w-[38px]">
        <Glyph w={14} h={13}>
          <path d="M0 0h6v5H0zM8 0h6v5H8zM0 8h6v5H0zM8 8h6v5H8z" fill="#fdeae3" />
        </Glyph>
      </Tool>
      <Tool label="읽기용 보기" className="w-[38px]">
        <Glyph w={13} h={13}>
          <path d="M.5.500h5l1 1 1-1h5v10h-5l-1 1-1-1h-5zM6.500 1v12" stroke="#fdeae3" />
          <path d="M2 3.500h3M2 5.500h3M2 7.500h3M8 3.500h3M8 5.500h3M8 7.500h3" stroke="#fdeae3" />
        </Glyph>
      </Tool>
      <Tool label="슬라이드 쇼" className="w-[38px]">
        <Glyph w={14} h={12}>
          <path d="M0 1h14" stroke="#fdeae3" strokeWidth="2" />
          <path d="M1.500 2v4.500h11V2M7 7v4M4 11.500h6M5 4.500h4" stroke="#fdeae3" />
        </Glyph>
      </Tool>
      <Tool label="축소" className="ml-[5px]">
        <Glyph w={6} h={2}>
          <path d="M0 1h6" stroke="#fff" strokeWidth="2" />
        </Glyph>
      </Tool>
      <input
        type="range"
        aria-label="확대/축소"
        min={0}
        max={100}
        defaultValue={30}
        className="mx-1 h-3 w-[100px] appearance-none bg-[linear-gradient(#fdeae3,#fdeae3),linear-gradient(#fdeae3,#fdeae3)] bg-[size:100%_1px,1px_5px] bg-center bg-no-repeat [&::-webkit-slider-thumb]:h-3 [&::-webkit-slider-thumb]:w-1 [&::-webkit-slider-thumb]:appearance-none [&::-webkit-slider-thumb]:bg-white"
      />
      <Tool label="확대">
        <Glyph w={8} h={8}>
          <path d="M0 4h8M4 0v8" stroke="#fff" strokeWidth="2" />
        </Glyph>
      </Tool>
      <button type="button" className="ml-4">
        63 %
      </button>
      <Tool label="창에 맞춤" className="ml-[13px]">
        <Glyph w={13} h={13}>
          <path d="M.5.500h12v12H.5z" stroke="#fdeae3" />
          <path
            d="M6.500 2v3M6.500 8v3M2 6.500h3M8 6.500h3M5 3.500L6.500 2 8 3.500M5 9.500L6.500 11 8 9.500M3.500 5L2 6.500 3.500 8M9.500 5L11 6.500 9.500 8"
            stroke="#fdeae3"
          />
        </Glyph>
      </Tool>
    </footer>
  )
}

export default function App() {
  return (
    <div className="flex min-h-screen flex-col bg-[#d04727] font-['Noto_Sans_CJK_KR',sans-serif] text-[13px] text-[#444]">
      <div className="flex flex-1 flex-col border border-b-0 border-[#b0563f] bg-linear-to-b from-white from-15% to-[#eeeeee]">
        <header className="bg-white">
          <TitleBar />
          <TabRow />
          <Ribbon />
        </header>
        <div className="flex flex-1 border-b border-[#fbe3da]">
          <Workspace />
          <FormatPane />
        </div>
      </div>
      <StatusBar />
    </div>
  )
}
